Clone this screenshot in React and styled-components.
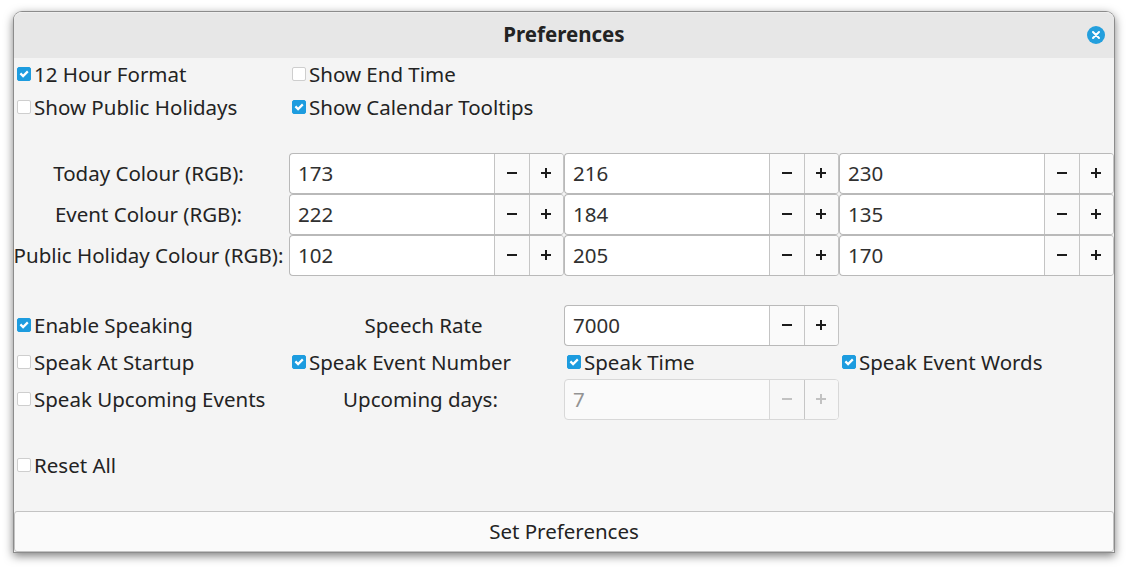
import React from "react";
import styled, { createGlobalStyle } from "styled-components";

const GlobalStyle = createGlobalStyle`
  * { box-sizing: border-box; }
  body {
    margin: 0;
    background: #fff;
    font-family: "Noto Sans", sans-serif;
    font-size: 20.5px;
    color: #232323;
  }
`;

const Desktop = styled.div`
  height: 569px;
  padding: 12px 14px 17px;
  overflow: hidden;
`;

const Window = styled.main`
  width: 1100px;
  height: 540px;
  display: flex;
  flex-direction: column;
  background: #f4f4f4;
  border-radius: 8px 8px 0 0;
  box-shadow: 0 0 0 1px #8c8c8c, 0 3px 10px 1px rgba(0, 0, 0, 0.5);
`;

const TitleBar = styled.header`
  height: 46px;
  flex: none;
  display: grid;
  grid-template-columns: 36px 1fr 36px;
  align-items: center;
  background: #e7e7e7;
  border-radius: 8px 8px 0 0;
  box-shadow: inset 0 1px 0 #efefef;
`;

const Title = styled.h1`
  grid-column: 2;
  margin: 0;
  padding-bottom: 2px;
  font-size: 20.5px;
  line-height: 28px;
  font-weight: 700;
  text-align: center;
`;

const CloseButton = styled.button`
  justify-self: center;
  width: 18px;
  height: 18px;
  padding: 0;
  border: 0;
  background: none;
  svg { display: block; }
`;

const Row = styled.div`
  display: grid;
  grid-template-columns: repeat(4, 275px);
  height: ${(p) => p.$height}px;
  margin-top: ${(p) => p.$gap || 0}px;
`;

const CheckLabel = styled.label`
  display: flex;
  align-items: center;
  gap: 3px;
  padding-left: 3px;
  white-space: nowrap;
`;

const Box = styled.span`
  width: 14px;
  height: 14px;
  margin-top: -1px;
  flex: none;
  border-radius: 2px;
  border: 1px solid ${(p) => (p.$on ? "#1d9cdf" : "#cecece")};
  background: ${(p) => (p.$on ? "#1d9cdf" : "#fff")};
  svg { display: block; margin: -1px; }
`;

const CheckText = styled.span`
  padding-bottom: 2px;
  line-height: 28px;
`;

const FieldLabel = styled.span`
  display: flex;
  align-items: center;
  justify-content: center;
  padding: 0 ${(p) => p.$trail || 6}px 2px 0;
  line-height: 28px;
  white-space: nowrap;
`;

const Spin = styled.div`
  display: grid;
  grid-template-columns: 204px 35px 34px;
  height: 41px;
  color: ${(p) => (p.$disabled ? "#939393" : "#303030")};
  border: 1px solid ${(p) => (p.$disabled ? "#d8d8d8" : "#b9b9b9")};
  border-right-color: ${(p) => (p.$disabled ? "#d8d8d8" : "#c4c4c4")};
  border-radius: 4px;
  background: ${(p) => (p.$disabled ? "#fafafa" : "#fff")};
  overflow: hidden;
`;

const Value = styled.span`
  padding-left: 8px;
  line-height: 39px;
`;

const Step = styled.button`
  padding: 0;
  border: 0;
  border-left: 1px solid ${(p) => p.$line};
  background: ${(p) => (p.$disabled ? "#f7f7f7" : "#fafafa")};
  color: ${(p) => (p.$disabled ? "#c2c2c2" : "#1c1c1c")};
  svg { display: block; }
`;

const Spacer = styled.div`
  flex: 1;
`;

const SubmitButton = styled.button`
  height: 41px;
  flex: none;
  padding: 0 0 2px;
  border: 1px solid #c3c3c3;
  border-radius: 3px;
  background: #fafafa;
  color: #232323;
  font: inherit;
  line-height: 28px;
`;

function Check({ label, on }) {
  return (
    <CheckLabel>
      <Box $on={on}>
        {on && (
          <svg width="14" height="14" viewBox="0 0 14 14">
            <path d="M3.4 6.4 6.1 9.1 10.8 4.4" fill="none" stroke="#fff" strokeWidth="2.2" />
          </svg>
        )}
      </Box>
      <CheckText>{label}</CheckText>
    </CheckLabel>
  );
}

function SpinBox({ value, disabled }) {
  return (
    <Spin $disabled={disabled}>
      <Value>{value}</Value>
      <Step $disabled={disabled} $line={disabled ? "#d8d8d8" : "#c4c4c4"} disabled={disabled} aria-label="Decrease">
        <svg width="34" height="39" viewBox="0 0 34 39">
          <path d="M12 19H22" stroke="currentColor" strokeWidth="2" />
        </svg>
      </Step>
      <Step $disabled={disabled} $line="#c6c6c6" disabled={disabled} aria-label="Increase">
        <svg width="33" height="39" viewBox="0 0 33 39">
          <path d="M11 19H21M16 14V24" stroke="currentColor" strokeWidth="2" />
        </svg>
      </Step>
    </Spin>
  );
}

const colours = [
  { label: "Today Colour (RGB):", rgb: [173, 216, 230] },
  { label: "Event Colour (RGB):", rgb: [222, 184, 135] },
  { label: "Public Holiday Colour (RGB):", rgb: [102, 205, 170] },
];

export default function App() {
  return (
    <>
      <GlobalStyle />
      <Desktop>
        <Window>
          <TitleBar>
            <Title>Preferences</Title>
            <CloseButton aria-label="Close">
              <svg width="18" height="18" viewBox="0 0 18 18">
                <circle cx="9" cy="9" r="9" fill="#239fdd" />
                <path d="M6 6 12 12M12 6 6 12" stroke="#fff" strokeWidth="2" strokeLinecap="round" />
              </svg>
            </CloseButton>
          </TitleBar>
          <Row $height={33}>
            <Check label="12 Hour Format" on />
            <Check label="Show End Time" />
          </Row>
          <Row $height={33}>
            <Check label="Show Public Holidays" />
            <Check label="Show Calendar Tooltips" on />
          </Row>
          {colours.map((c, i) => (
            <Row key={c.label} $height={41} $gap={i === 0 ? 29 : 0}>
              <FieldLabel>{c.label}</FieldLabel>
              {c.rgb.map((v, k) => (
                <SpinBox key={k} value={v} />
              ))}
            </Row>
          ))}
          <Row $height={41} $gap={29}>
            <Check label="Enable Speaking" on />
            <FieldLabel>Speech Rate</FieldLabel>
            <SpinBox value={7000} />
          </Row>
          <Row $height={33}>
            <Check label="Speak At Startup" />
            <Check label="Speak Event Number" on />
            <Check label="Speak Time" on />
            <Check label="Speak Event Words" on />
          </Row>
          <Row $height={41}>
            <Check label="Speak Upcoming Events" />
            <FieldLabel $trail={12}>Upcoming days:</FieldLabel>
            <SpinBox value={7} disabled />
          </Row>
          <Row $height={33} $gap={29}>
            <Check label="Reset All" />
          </Row>
          <Spacer />
          <SubmitButton>Set Preferences</SubmitButton>
        </Window>
      </Desktop>
    </>
  );
}
